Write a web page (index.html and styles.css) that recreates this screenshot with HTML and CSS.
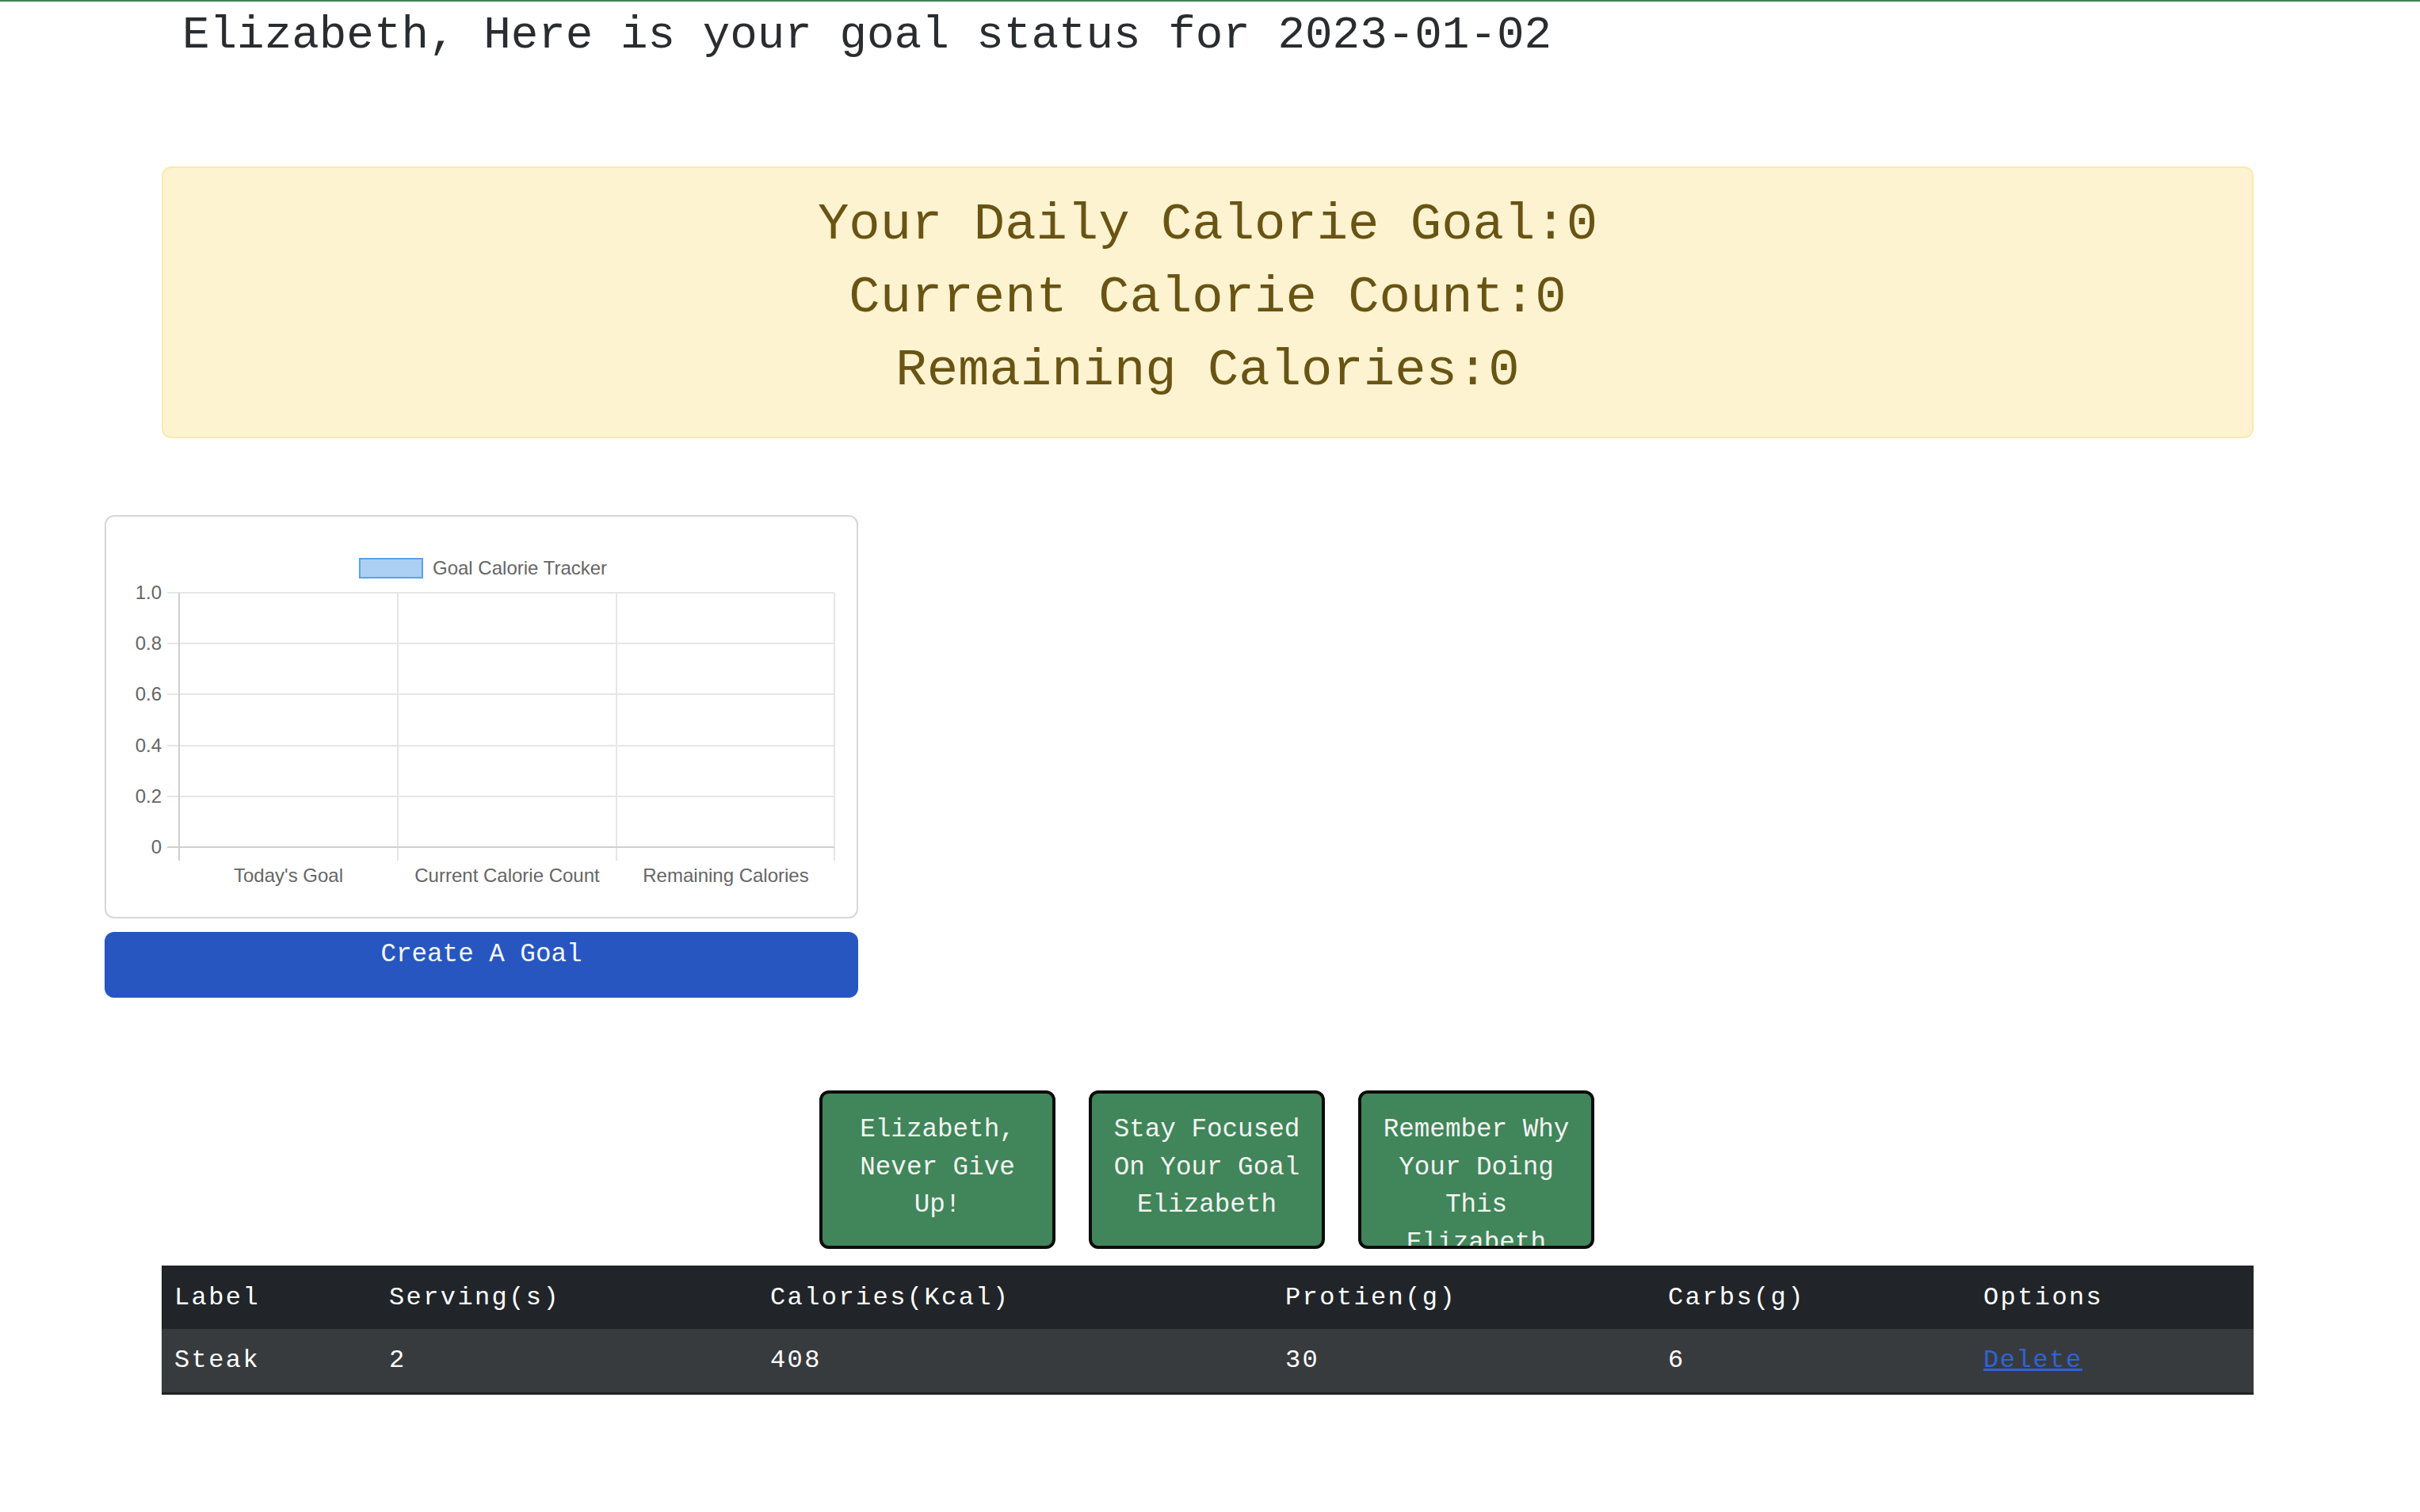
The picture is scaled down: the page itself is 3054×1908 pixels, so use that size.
FILE: index.html
```html
<!DOCTYPE html>
<html>
<head>
<meta charset="utf-8">
<title>Goal status</title>
<link rel="stylesheet" href="styles.css">
</head>
<body>
<div class="topline"></div>
<h1 class="greeting">Elizabeth, Here is your goal status for 2023-01-02</h1>

<div class="alert">
  <div class="alert-line">Your Daily Calorie Goal:0</div>
  <div class="alert-line">Current Calorie Count:0</div>
  <div class="alert-line">Remaining Calories:0</div>
</div>

<div class="chart-area">
  <div class="chart-card">
    <svg class="chart" width="946" height="505" viewBox="0 0 946 505" xmlns="http://www.w3.org/2000/svg">
      <rect x="320" y="53" width="79" height="24" fill="#abd0f3" stroke="#5aa2e8" stroke-width="2"/>
      <text x="412" y="73" class="legend-text">Goal Calorie Tracker</text>
      <g stroke="#e6e6e6" stroke-width="2">
        <line x1="77" y1="96" x2="919" y2="96"/>
        <line x1="77" y1="160" x2="919" y2="160"/>
        <line x1="77" y1="224" x2="919" y2="224"/>
        <line x1="77" y1="289" x2="919" y2="289"/>
        <line x1="77" y1="353" x2="919" y2="353"/>
        <line x1="368" y1="96" x2="368" y2="434"/>
        <line x1="644" y1="96" x2="644" y2="434"/>
        <line x1="919" y1="96" x2="919" y2="434"/>
      </g>
      <g stroke="#cfcfcf" stroke-width="2">
        <line x1="77" y1="417" x2="919" y2="417"/>
        <line x1="92" y1="96" x2="92" y2="434"/>
      </g>
      <g class="tick-text" text-anchor="end">
        <text x="70" y="104">1.0</text>
        <text x="70" y="168">0.8</text>
        <text x="70" y="232">0.6</text>
        <text x="70" y="297">0.4</text>
        <text x="70" y="361">0.2</text>
        <text x="70" y="425">0</text>
      </g>
      <g class="tick-text" text-anchor="middle">
        <text x="230" y="461">Today's Goal</text>
        <text x="506" y="461">Current Calorie Count</text>
        <text x="782" y="461">Remaining Calories</text>
      </g>
    </svg>
  </div>
  <div class="btn-create">Create A Goal</div>
</div>

<div class="cards">
  <div class="card">Elizabeth, Never Give Up!</div>
  <div class="card">Stay Focused On Your Goal Elizabeth</div>
  <div class="card">Remember Why Your Doing This Elizabeth</div>
</div>

<table class="food-table">
  <thead>
    <tr>
      <th class="c1">Label</th>
      <th class="c2">Serving(s)</th>
      <th class="c3">Calories(Kcal)</th>
      <th class="c4">Protien(g)</th>
      <th class="c5">Carbs(g)</th>
      <th class="c6">Options</th>
    </tr>
  </thead>
  <tbody>
    <tr><td>Steak</td><td>2</td><td>408</td><td>30</td><td>6</td><td><a href="#" class="del">Delete</a></td></tr>
  </tbody>
</table>
</body>
</html>
```

FILE: styles.css
```css
html, body {
  margin: 0;
  padding: 0;
  background: #ffffff;
}
body {
  font-family: "Liberation Mono", "DejaVu Sans Mono", monospace;
  color: #2a2d30;
  width: 3054px;
  min-height: 1908px;
}
.topline {
  height: 2px;
  background: #408558;
}
.greeting {
  margin: 0;
  padding: 14px 0 0 230px;
  font-size: 57.6px;
  font-weight: normal;
  line-height: 1;
  height: 208px;
  box-sizing: border-box;
}
.alert {
  margin-left: 204px;
  width: 2640px;
  height: 343px;
  box-sizing: border-box;
  background: #fdf3d1;
  border: 2px solid #fbe9ae;
  border-radius: 12px;
  color: #6a5413;
  text-align: center;
  padding-top: 26px;
}
.alert-line {
  font-size: 65.6px;
  line-height: 92px;
}
.chart-area {
  margin-left: 132px;
  margin-top: 97px;
  width: 951px;
}
.chart-card {
  height: 509px;
  box-sizing: border-box;
  border: 2px solid #d7d7d7;
  border-radius: 12px;
  background: #fff;
  overflow: hidden;
}
.chart {
  display: block;
}
.legend-text, .tick-text {
  font-family: "Liberation Sans", Arial, sans-serif;
  font-size: 24px;
  fill: #666666;
}
.btn-create {
  margin-top: 17px;
  height: 83px;
  box-sizing: border-box;
  background: #2756c1;
  border-radius: 12px;
  color: #f4f6ff;
  text-align: center;
  font-size: 32.6px;
  line-height: 49px;
  padding-top: 4px;
}
.cards {
  display: flex;
  justify-content: center;
  gap: 42px;
  margin-top: 117px;
  padding-right: 8px;
}
.card {
  width: 298px;
  height: 200px;
  box-sizing: border-box;
  border: 4px solid #0c0c0c;
  border-radius: 12px;
  background: #41855a;
  color: #f2f5f2;
  text-align: center;
  font-size: 32.6px;
  line-height: 47.5px;
  padding: 22px 20px 0;
  overflow: hidden;
}
.food-table {
  margin-left: 204px;
  margin-top: 21px;
  width: 2640px;
  border-collapse: collapse;
  table-layout: fixed;
  font-size: 32px;
  letter-spacing: 2.4px;
  color: #ffffff;
}
.food-table th,
.food-table td {
  box-sizing: border-box;
  padding: 0 16px;
  text-align: left;
  font-weight: normal;
}
.c1 { width: 271px; }
.c2 { width: 481px; }
.c3 { width: 650px; }
.c4 { width: 483px; }
.c5 { width: 398px; }
.c6 { width: 357px; }
.food-table th {
  background: #212529;
  height: 80px;
}
.food-table td {
  background: #383b3e;
  height: 81px;
  border-bottom: 3px solid #202326;
}
.del {
  color: #2f63d6;
  text-decoration: underline;
  letter-spacing: 1.6px;
}
```
